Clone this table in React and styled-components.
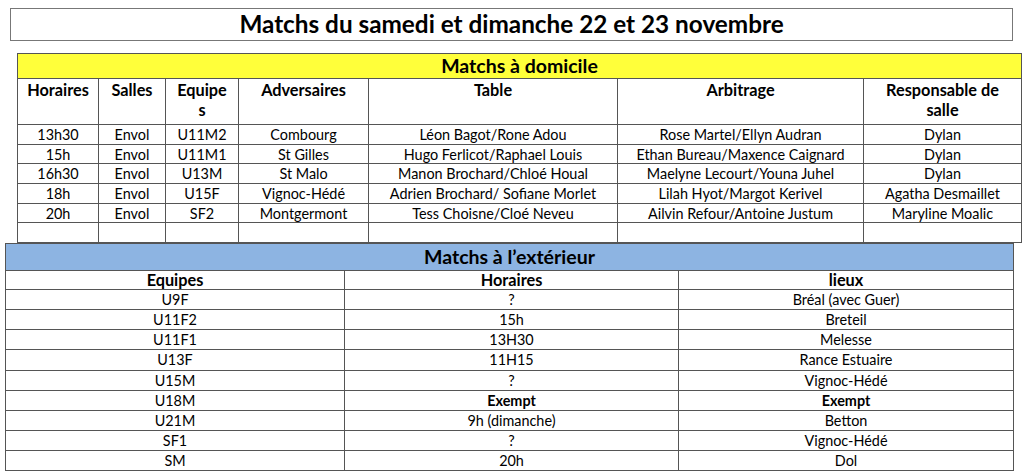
import React from "react";
import styled, { createGlobalStyle } from "styled-components";

const Global = createGlobalStyle`
  html, body { margin: 0; padding: 0; background: #fff; }
  body { font-family: Lato, "Open Sans", sans-serif; color: #000; }
`;

const Page = styled.div`
  width: 1024px;
  height: 475px;
  overflow: hidden;
  padding-top: 8px;
  box-sizing: border-box;
  display: flex;
  flex-direction: column;
  align-items: flex-start;
`;

const TitleBox = styled.div`
  margin-left: 10px;
  width: 1003px;
  height: 33px;
  box-sizing: border-box;
  border: 1px solid #777;
  display: flex;
  align-items: center;
  justify-content: center;
  font-weight: 700;
  font-size: 24.3px;
  line-height: 1;
`;

const Table = styled.table`
  margin-left: ${(p) => p.$left}px;
  margin-top: ${(p) => p.$top}px;
  width: ${(p) => p.$width}px;
  table-layout: fixed;
  border-collapse: collapse;
  font-size: 14.4px;
`;

const Row = styled.tr`
  height: ${(p) => p.$h}px;
`;

const Banner = styled.th`
  background: ${(p) => p.$bg};
  padding: 0;
  border: 1px solid #555;
  font-size: 19.5px;
  line-height: 20px;
  font-weight: 700;
  text-align: center;
  vertical-align: middle;
`;

const HeadCell = styled.th`
  border: 1px solid #555;
  padding: ${(p) => (p.$top ? "1px 2px 0" : "0 2px")};
  font-size: 16.3px;
  font-weight: 700;
  line-height: ${(p) => (p.$top ? "20px" : "16px")};
  text-align: center;
  vertical-align: ${(p) => (p.$top ? "top" : "middle")};
`;

const Cell = styled.td`
  border: 1px solid #555;
  padding: 0 2px;
  line-height: 15px;
  text-align: center;
  vertical-align: middle;
  white-space: nowrap;
  font-weight: ${(p) => (p.$bold ? 700 : 400)};
`;

const homeCols = [81, 67, 73, 130, 249, 246, 158];
const homeHeads = [
  "Horaires",
  "Salles",
  <>Equipe<br />s</>,
  "Adversaires",
  "Table",
  "Arbitrage",
  <>Responsable de<br />salle</>,
];
const homeRows = [
  ["13h30", "Envol", "U11M2", "Combourg", "Léon Bagot/Rone Adou", "Rose Martel/Ellyn Audran", "Dylan"],
  ["15h", "Envol", "U11M1", "St Gilles", "Hugo Ferlicot/Raphael Louis", "Ethan Bureau/Maxence Caignard", "Dylan"],
  ["16h30", "Envol", "U13M", "St Malo", "Manon Brochard/Chloé Houal", "Maelyne Lecourt/Youna Juhel", "Dylan"],
  ["18h", "Envol", "U15F", "Vignoc-Hédé", "Adrien Brochard/ Sofiane Morlet", "Lilah Hyot/Margot Kerivel", "Agatha Desmaillet"],
  ["20h", "Envol", "SF2", "Montgermont", "Tess Choisne/Cloé Neveu", "Ailvin Refour/Antoine Justum", "Maryline Moalic"],
  ["", "", "", "", "", "", ""],
];

const awayCols = [339, 334, 335];
const awayRows = [
  ["U9F", "?", "Bréal (avec Guer)"],
  ["U11F2", "15h", "Breteil"],
  ["U11F1", "13H30", "Melesse"],
  ["U13F", "11H15", "Rance Estuaire"],
  ["U15M", "?", "Vignoc-Hédé"],
  ["U18M", "Exempt", "Exempt", true],
  ["U21M", "9h (dimanche)", "Betton"],
  ["SF1", "?", "Vignoc-Hédé"],
  ["SM", "20h", "Dol"],
];

export default function App() {
  return (
    <>
      <Global />
      <Page>
        <TitleBox>Matchs du samedi et dimanche 22 et 23 novembre</TitleBox>

        <Table $left={17} $top={12} $width={1004}>
          <colgroup>
            {homeCols.map((w, i) => (
              <col key={i} style={{ width: w }} />
            ))}
          </colgroup>
          <thead>
            <Row $h={25}>
              <Banner colSpan={7} $bg="#ffff3a">Matchs à domicile</Banner>
            </Row>
            <Row $h={46}>
              {homeHeads.map((h, i) => (
                <HeadCell key={i} $top>{h}</HeadCell>
              ))}
            </Row>
          </thead>
          <tbody>
            {homeRows.map((r, i) => (
              <Row key={i} $h={19.7}>
                {r.map((c, j) => (
                  <Cell key={j}>{c}</Cell>
                ))}
              </Row>
            ))}
          </tbody>
        </Table>

        <Table $left={5} $top={0} $width={1008}>
          <colgroup>
            {awayCols.map((w, i) => (
              <col key={i} style={{ width: w }} />
            ))}
          </colgroup>
          <thead>
            <Row $h={27}>
              <Banner colSpan={3} $bg="#8db4e2">Matchs à l’extérieur</Banner>
            </Row>
            <Row $h={19}>
              <HeadCell>Equipes</HeadCell>
              <HeadCell>Horaires</HeadCell>
              <HeadCell>lieux</HeadCell>
            </Row>
          </thead>
          <tbody>
            {awayRows.map((r, i) => (
              <Row key={i} $h={20.1}>
                <Cell>{r[0]}</Cell>
                <Cell $bold={r[3]}>{r[1]}</Cell>
                <Cell $bold={r[3]}>{r[2]}</Cell>
              </Row>
            ))}
          </tbody>
        </Table>
      </Page>
    </>
  );
}
